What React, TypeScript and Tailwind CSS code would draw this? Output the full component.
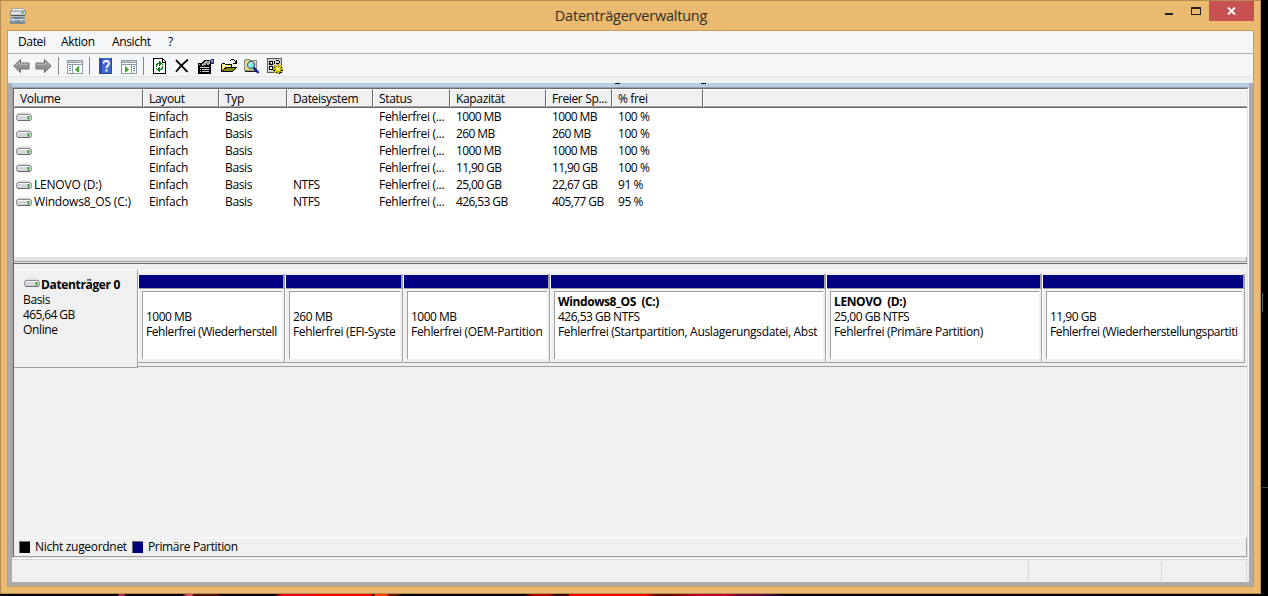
import type { ReactNode } from "react";

const columns = [
  { label: "Volume", width: "w-[129px]", tracking: "tracking-[-0.2px]" },
  { label: "Layout", width: "w-[76px]", tracking: "tracking-[-0.25px]" },
  { label: "Typ", width: "w-[68px]", tracking: "tracking-[-0.35px]" },
  { label: "Dateisystem", width: "w-[86px]", tracking: "tracking-[-0.45px]" },
  { label: "Status", width: "w-[77px]", tracking: "tracking-[-0.3px]" },
  { label: "Kapazität", width: "w-[96px]", tracking: "tracking-[-0.6px]" },
  { label: "Freier Sp...", width: "w-[66px]", tracking: "tracking-[-0.6px]" },
  { label: "% frei", width: "w-[91px]", tracking: "tracking-[-0.45px]" },
];

const volumes = [
  ["", "Einfach", "Basis", "", "Fehlerfrei (...", "1000 MB", "1000 MB", "100 %"],
  ["", "Einfach", "Basis", "", "Fehlerfrei (...", "260 MB", "260 MB", "100 %"],
  ["", "Einfach", "Basis", "", "Fehlerfrei (...", "1000 MB", "1000 MB", "100 %"],
  ["", "Einfach", "Basis", "", "Fehlerfrei (...", "11,90 GB", "11,90 GB", "100 %"],
  ["LENOVO (D:)", "Einfach", "Basis", "NTFS", "Fehlerfrei (...", "25,00 GB", "22,67 GB", "91 %"],
  ["Windows8_OS (C:)", "Einfach", "Basis", "NTFS", "Fehlerfrei (...", "426,53 GB", "405,77 GB", "95 %"],
];

const partitions = [
  { name: "", size: "1000 MB", status: "Fehlerfrei (Wiederherstell", width: "w-[147px]", tracking: "tracking-[-0.43px]" },
  { name: "", size: "260 MB", status: "Fehlerfrei (EFI-Syste", width: "w-[118px]", tracking: "tracking-[-0.35px]" },
  { name: "", size: "1000 MB", status: "Fehlerfrei (OEM-Partition", width: "w-[147px]", tracking: "tracking-[-0.3px]" },
  {
    name: "Windows8_OS  (C:)",
    size: "426,53 GB NTFS",
    status: "Fehlerfrei (Startpartition, Auslagerungsdatei, Abst",
    width: "w-[276px]",
    tracking: "tracking-[-0.33px]",
  },
  {
    name: "LENOVO  (D:)",
    size: "25,00 GB NTFS",
    status: "Fehlerfrei (Primäre Partition)",
    width: "w-[216px]",
    tracking: "tracking-[-0.35px]",
  },
  {
    name: "",
    size: "11,90 GB",
    status: "Fehlerfrei (Wiederherstellungspartiti",
    width: "w-[203px]",
    tracking: "tracking-[-0.4px]",
  },
];

function DriveIcon() {
  return (
    <svg width="16" height="10" viewBox="0 0 16 10" className="shrink-0">
      <path d="M3 1h10l2 2H1z" fill="#f2f2f2" stroke="#c4c4c4" strokeWidth=".8" />
      <rect x=".5" y="2.5" width="15" height="6" rx="2" fill="#d5d5da" stroke="#87878c" />
      <path d="M2 3.500h12" stroke="#f6f6f6" />
      <path d="M2 8.500h12" stroke="#66666b" />
      <rect x="11.500" y="4" width="2" height="3.500" fill="#3aa82a" />
    </svg>
  );
}

function AppIcon() {
  return (
    <svg width="16" height="16" viewBox="0 0 16 16">
      <path d="M2.5.5h11l1.500 3H1z" fill="#f3f3f3" stroke="#9a9a9a" strokeWidth=".8" />
      <rect x=".5" y="3" width="15" height="4.500" rx="1" fill="#e4e4e6" stroke="#66686c" strokeWidth=".8" />
      <path d="M1 7.300h14" stroke="#4c5054" />
      <rect x="11.500" y="3.500" width="2" height="2.500" fill="#2fc41b" />
      <rect x="0" y="9" width="15" height="6.500" fill="#8797a5" />
      <path d="M3 8.500h10" stroke="#aebac4" />
      <path d="M3 9.500h10v1H3z" fill="#4b6377" />
      <path d="M0 11.500h15" stroke="#c9d3dc" />
      <path d="M3.500 10.500v3M11.500 10.500v3" stroke="#e8eef3" />
      <path d="M0 15h15" stroke="#5f7383" />
    </svg>
  );
}

function ArrowIcon({ flip }: { flip?: boolean }) {
  return (
    <svg width="17" height="16" viewBox="0 0 17 16" className={flip ? "-scale-x-100" : ""}>
      <path d="M.7 8 7.500 1.500v3.500h8.500v6H7.500v3.500z" fill="#929292" stroke="#707070" />
      <path d="M2.500 8 6.500 4.200v2h8v1.500" fill="none" stroke="#bdbdbd" />
    </svg>
  );
}

function PaneIcon({ right }: { right?: boolean }) {
  return (
    <svg width="16" height="14" viewBox="0 0 16 14" shapeRendering="crispEdges">
      <path d="M0 0h16v14H0z" fill="#8e99a5" />
      <path d="M1 1h14v1H1z" fill="#c3ccd5" />
      <path d="M11 1h1v1h-1zM13 1h1v1h-1z" fill="#fff" />
      <path d="M1 3h14v1H1zM1 5h14v8H1z" fill="#fff" />
      {right ? (
        <>
          <path d="M10 5h1v8h-1z" fill="#8e99a5" />
          <path d="M12 6h2v1h-2zM12 8h2v1h-2zM12 10h2v1h-2z" fill="#4f87c4" />
          <path d="M4 6h1v1h1v1h1v1h1v1H7v1H6v1H4z" fill="#42b52d" />
        </>
      ) : (
        <>
          <path d="M5 5h1v8H5z" fill="#8e99a5" />
          <path d="M2 6h2v1H2zM2 8h2v1H2zM2 10h2v1H2z" fill="#4f87c4" />
          <path d="M12 6h-1v1h-1v1H9v1H8v1h1v1h1v1h2z" fill="#42b52d" />
        </>
      )}
    </svg>
  );
}

function HelpIcon() {
  return (
    <svg width="13" height="16" viewBox="0 0 13 16">
      <rect width="13" height="16" fill="#4068d0" />
      <rect width="3" height="16" fill="#2a4bab" />
      <path d="M12.500 0v16M0 15.500h13" stroke="#27479c" />
      <path d="M4.500 5.500c0-3.500 5.500-3.200 5.500 0 0 2-2.600 2-2.600 4.800" fill="none" stroke="#fff" strokeWidth="1.900" />
      <rect x="6.400" y="11.500" width="2" height="2" fill="#fff" />
    </svg>
  );
}

function RefreshIcon() {
  return (
    <svg width="14" height="16" viewBox="0 0 14 16" shapeRendering="crispEdges">
      <path d="M0 0h10v1h1v1h1v1h1v13H0z" fill="#000" />
      <path d="M1 1h8v4h3v10H1z" fill="#fff" />
      <path d="M10 2h1v1h1v1h-2z" fill="#fff" />
      <path d="M6 3h1v1h1v1h1v1H8v1H7v1H6V6H5v1H4V5h2z" fill="#008000" />
      <path d="M7 14H6v-1H5v-1H4v-1h1v-1h1V9h1v2h1v-1h1v2H7z" fill="#008000" />
      <path d="M3 6h1v3H3zM9 8h1v3H9zM9 6h1v1H9zM3 10h1v1H3z" fill="#008000" />
    </svg>
  );
}

function DeleteIcon() {
  return (
    <svg width="14" height="14" viewBox="0 0 14 14">
      <path d="M1 1.200 12.500 12.800" stroke="#000" strokeWidth="1.900" />
      <path d="M13 .5Q6 6 1 12.800" fill="none" stroke="#000" strokeWidth="1.800" />
    </svg>
  );
}

function PropertiesIcon() {
  return (
    <svg width="16" height="15" viewBox="0 0 16 15" shapeRendering="crispEdges">
      <path d="M0 4h13v11H0z" fill="#000" />
      <path d="M1 5h2v1H1zM2 8h9v1H2zM2 10h1v1H2zM4 10h7v1H4zM2 12h1v1H2zM4 12h7v1H4z" fill="#c9c9c9" />
      <path d="M2 5h1V4h1V3h1V2h1V1h7v1h1v3h-1v1h-1v1h-2v1H9V7H7v1H5V7H3z" fill="#000" />
      <path d="M4 5h1V4h1V3h1V2h5v3h-1v1H9V5H8v1H6v1H4z" fill="#b9b9b9" />
      <path d="M7 4h2V3h2v1H9v1H7zM5 6h1v1H5z" fill="#6e6e6e" />
      <path d="M11 1h2V0h3v5h-3V3h-1V2h-1z" fill="#20307d" />
      <path d="M13 1h2v3h-1V3h-1z" fill="#8994d0" />
    </svg>
  );
}

function FolderIcon() {
  return (
    <svg width="16" height="14" viewBox="0 0 16 14" shapeRendering="crispEdges">
      <path d="M0 5h1V4h3v1h7v3H4v2H3v2H2v1H0z" fill="#000" />
      <path d="M1 5h3v1h6v2H4v1H3v1H2v1H1z" fill="#fff15a" />
      <path d="M1 6h1v1H1zM3 6h1v1H3zM5 7h1v1H5zM7 7h1v1H7z" fill="#fff" />
      <path d="M4 8h12v1h-1v1h-1v1h-1v1h-1v1H0v-1h1v-1h1v-1h1V9h1z" fill="#000" />
      <path d="M5 9h9v1h-1v1h-1v1H2v-1h1v-1h2z" fill="#858500" />
      <path d="M9 1h1v1H9zM10 0h3v1h-3zM13 1h1v1h-1zM15 1h1v4h-4V4h2V3h1zM14 2h1v1h-1z" fill="#000" />
    </svg>
  );
}

function SearchIcon() {
  return (
    <svg width="16" height="16" viewBox="0 0 16 16" shapeRendering="crispEdges">
      <path d="M0 2h1V1h5v1h7v11H0z" fill="#8a8a8a" />
      <path d="M1 3h1V2h3v1h7v9H1z" fill="#e3da94" />
      <path d="M2 4h1v1H2zM4 3h1v1H4zM2 10h1v1H2zM4 11h1v1H4zM11 4h1v1h-1zM10 11h1v1h-1z" fill="#ffef3b" />
      <path d="M1 13h11v1H1z" fill="#222" />
      <circle cx="7" cy="7" r="3.600" fill="#77e4ee" stroke="#4c5660" shapeRendering="auto" />
      <path d="M5 6h1V5h2v1H6v2H5z" fill="#fff" />
      <path d="M9.500 9.500 14.500 15" stroke="#0714a0" strokeWidth="2.200" shapeRendering="auto" />
    </svg>
  );
}

function SettingsIcon() {
  return (
    <svg width="16" height="16" viewBox="0 0 16 16" shapeRendering="crispEdges">
      <path d="M0 0h15v15H0z" fill="#5a5a5a" />
      <path d="M1 1h13v13H1z" fill="#d2d2d2" />
      <path d="M2 3h4v4H2zM2 8h4v4H2z" fill="#000" />
      <path d="M3 4h2v1H3zM3 9h2v2H3zM4 5h1v1H4z" fill="#fff" />
      <path d="M7 3h1v3H7zM9 2h3v1H9zM9 5h3v1H9zM12 3h1v2h-1zM7 8h1v2H7zM6 12h2v1H6z" fill="#000" />
      <path d="M10 6h2v2h1V7h2v2h-1v1h2v2h-2v1h1v2h-2v-1h-1v2h-2v-2H9v1H7v-2h1v-1H6v-2h2V9H7V7h2v1h1z" fill="#b09f00" />
      <path d="M10 7h1v1h-1zM9 9h4v4H9zM8 8h1v1H8zM13 8h1v1h-1zM7 10h1v1H7zM14 10h1v1h-1zM8 13h1v1H8zM11 14h1v1h-1z" fill="#fff000" />
      <path d="M10 10h2v2h-2z" fill="#fff" />
      <path d="M9 14h1v1H9zM13 14h2v1h-2zM12 15h1v1h-1zM15 12h1v1h-1zM14 9h1v1h-1zM14 12h1v1h-1z" fill="#000" />
    </svg>
  );
}

function ToolSlot({ width, children }: { width: string; children: ReactNode }) {
  return <div className={`${width} flex h-full items-center`}>{children}</div>;
}

function Separator({ width }: { width: string }) {
  return (
    <div className={`${width} shrink-0`}>
      <div className="h-[18px] w-px bg-[#858585]" />
    </div>
  );
}

function TitleBar() {
  return (
    <header className="flex h-[29px] justify-between">
      <div className="w-[130px] pl-[9px] pt-[7px]">
        <AppIcon />
      </div>
      <h1 className="pl-[1px] pt-[5px] text-[14.5px] leading-5 tracking-[-0.22px] text-[#352d22]">Datenträgerverwaltung</h1>
      <div className="flex w-[130px] justify-end pr-[6px]">
        <div className="mr-[18px] mt-[12px] h-[2px] w-2 bg-[#1f1f23]" />
        <div className="mr-[8px] mt-[6px] h-[8px] w-[10px] border border-t-2 border-[#29231c]" />
        <div className="flex h-5 w-[45px] items-center justify-center bg-[#c75050]">
          <svg width="9" height="8" viewBox="0 0 9 8">
            <path d="M1 .5 8 7.500M8 .5 1 7.500" stroke="#fff" strokeWidth="1.900" />
          </svg>
        </div>
      </div>
    </header>
  );
}

function Toolbar() {
  return (
    <div className="flex h-[22px] items-center pl-[5px] pt-[2px]">
      <ToolSlot width="w-[22px]"><ArrowIcon /></ToolSlot>
      <ToolSlot width="w-[23px]"><ArrowIcon flip /></ToolSlot>
      <Separator width="w-[9px]" />
      <div className="pt-[2px]"><ToolSlot width="w-[22px]"><PaneIcon /></ToolSlot></div>
      <Separator width="w-[10px]" />
      <ToolSlot width="w-[22px]"><HelpIcon /></ToolSlot>
      <div className="pt-[2px]"><ToolSlot width="w-[22px]"><PaneIcon right /></ToolSlot></div>
      <Separator width="w-[10px]" />
      <ToolSlot width="w-[22px]"><RefreshIcon /></ToolSlot>
      <ToolSlot width="w-[23px]"><DeleteIcon /></ToolSlot>
      <ToolSlot width="w-[23px]"><PropertiesIcon /></ToolSlot>
      <ToolSlot width="w-[23px]"><FolderIcon /></ToolSlot>
      <ToolSlot width="w-[23px]"><SearchIcon /></ToolSlot>
      <ToolSlot width="w-[16px]"><SettingsIcon /></ToolSlot>
    </div>
  );
}

function VolumeList() {
  return (
    <section className="h-[168px] bg-white">
      <div className="flex h-[19px] border-b border-[#696969] bg-[#f0f0f0]">
        {columns.map((col) => (
          <div
            key={col.label}
            className={`${col.width} shrink-0 whitespace-nowrap border-b border-l border-r border-t border-b-[#a0a0a0] border-l-white border-r-[#696969] border-t-white pl-[5px] leading-[18px]`}
          >
            {col.label}
          </div>
        ))}
        <div className="grow border-b border-l border-t border-b-[#a0a0a0] border-l-white border-t-white" />
      </div>
      {volumes.map((row, i) => (
        <div key={i} className="flex h-[17px] leading-[17px]">
          {row.map((cell, j) => (
            <div
              key={j}
              className={`${columns[j].width} ${columns[j].tracking} flex shrink-0 items-center whitespace-nowrap ${j === 0 ? "pl-[2px]" : "pl-[6px]"}`}
            >
              {j === 0 && <DriveIcon />}
              <span className={j === 0 ? "pl-[2px]" : ""}>{cell}</span>
            </div>
          ))}
        </div>
      ))}
    </section>
  );
}

function DiskRow() {
  return (
    <div className="flex h-[99px]">
      <div className="h-[99px] w-[124px] border-b border-r border-t border-b-[#a0a0a0] border-r-[#a0a0a0] border-t-white pl-[9px] pt-[7px] leading-[15px]">
        <div className="flex h-[15px] items-center whitespace-nowrap font-bold">
          <div className="mb-1 ml-px mr-px"><DriveIcon /></div>
          <span className="tracking-[-0.35px]">Datenträger 0</span>
        </div>
        <div>Basis</div>
        <div className="tracking-[-0.6px]">465,64 GB</div>
        <div>Online</div>
      </div>
      <div className="mt-px flex h-[97px] grow border-b border-t border-b-[#a0a0a0] border-t-white pt-[3px]">
        {partitions.map((p, i) => (
          <div key={i} className={`${p.width} h-[89px] shrink-0 border-b border-l border-r border-b-[#a0a0a0] border-l-white border-r-[#a0a0a0]`}>
            <div className="h-[15px] border-b border-r border-[#a0a0a0] pt-px">
              <div className="h-[13px] bg-[#000080]" />
            </div>
            <div className="h-[73px] border-t border-white pb-[3px] pl-[3px] pr-[2px] pt-px">
              <div className="h-[68px] overflow-hidden whitespace-pre border-l border-t border-[#a0a0a0] bg-white pl-[3px] pt-[2px] leading-[15px]">
                <div className="h-[15px] font-bold tracking-[-0.4px]">{p.name}</div>
                <div className="tracking-[-0.5px]">{p.size}</div>
                <div className={p.tracking}>{p.status}</div>
              </div>
            </div>
          </div>
        ))}
      </div>
    </div>
  );
}

function Legend() {
  return (
    <div className="flex h-5 items-center border-b border-r border-t border-b-[#a0a0a0] border-r-[#a0a0a0] border-t-white pl-[5px] tracking-[-0.3px]">
      <div className="mr-[5px] h-3 w-[11px] border-l border-t border-[#707070] bg-black" />
      <span className="w-[97px]">Nicht zugeordnet</span>
      <div className="mr-[5px] h-3 w-[11px] border-l border-t border-[#707070] bg-[#000080]" />
      <span className="tracking-[-0.35px]">Primäre Partition</span>
    </div>
  );
}

function StatusBar() {
  return (
    <footer className="flex h-[23px] justify-end border-t border-[#d7d7d7] pt-px">
      <div className="h-[20px] w-[133px] border-l border-[#d7d7d7]" />
      <div className="h-[20px] w-[86px] border-l border-r border-[#d7d7d7]" />
      <div className="w-[2px]" />
    </footer>
  );
}

export default function App() {
  return (
    <div className="relative h-[596px] w-[1268px] overflow-hidden bg-black font-['Open_Sans','Noto_Sans',sans-serif] text-[12px] tracking-[-0.35px] text-black">
      <div className="h-[594px] w-[1261px] border border-[#b58d52] bg-[#eaba70]">
        <TitleBar />
        <main className="ml-[6px] h-[557px] w-[1247px] border border-[#c59b58] bg-[#f0f0f0]">
          <nav className="flex h-[23px] border-b border-[#a9adb1] bg-[#f5f6f7] pl-[10px] leading-[22px]">
            <span className="w-[43px]">Datei</span>
            <span className="w-[51px]">Aktion</span>
            <span className="w-[56px]">Ansicht</span>
            <span>?</span>
          </nav>
          <div className="h-[23px] border-b border-[#e3e3e3] bg-[#f5f6f7]">
            <Toolbar />
          </div>
          <div className="h-[6px]" />
          <div className="h-[503px] border-b-4 border-l-4 border-r-4 border-[#ababab]">
            <div className="h-1 bg-[#b4cde8]" />
            <div className="h-[471px] border-b border-l border-r border-t border-b-[#e3e3e3] border-l-[#a0a0a0] border-r-white border-t-[#a0a0a0]">
              <div className="h-[469px] border-l border-r border-t border-l-[#696969] border-r-[#e3e3e3] border-t-[#696969]">
                <VolumeList />
                <div className="h-[7px] border-b border-[#696969] bg-[#e3e3e3] pb-px">
                  <div className="h-[5px] border-b border-r border-[#a0a0a0]" />
                </div>
                <div className="h-[5px]" />
                <DiskRow />
                <div className="h-[169px]" />
                <Legend />
              </div>
            </div>
            <div className="h-px bg-white" />
            <StatusBar />
          </div>
        </main>
      </div>
      <div className="h-[2px] bg-[linear-gradient(90deg,#000_0_118px,#b32655_119px_124px,#000_126px_182px,#d54b66_187px_192px,#4a0b0c_194px_218px,#000_220px_274px,#ef001c_282px_310px,#ff0000_312px_371px,#4d0500_372px_374px,#ff4000_375px_386px,#651300_390px_396px,#000_402px_524px,#b90000_534px_548px,#3a0000_556px_568px,#ff0000_570px_645px,#650000_655px_670px,#c90036_700px_725px,#750037_738px_755px,#42063e_770px,#000_785px)]" />
      <div className="absolute left-[615px] top-[83px] h-px w-[5px] bg-black" />
      <div className="absolute left-[701px] top-[83px] h-px w-[5px] bg-black" />
      <div className="absolute left-[1262px] top-[293px] h-[19px] w-px bg-[#45657a]" />
      <div className="absolute left-[1262px] top-[487px] h-px w-[6px] bg-[#354a55]" />
    </div>
  );
}
